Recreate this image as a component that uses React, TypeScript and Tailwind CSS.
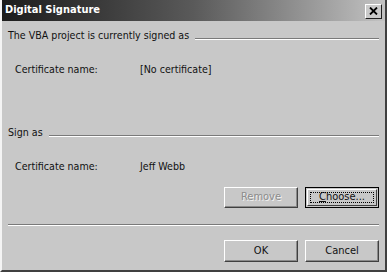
export default function App() {
  const font = { fontFamily: '"DejaVu Sans Condensed", "DejaVu Sans", "Liberation Sans", sans-serif' };

  return (
    <div
      className="w-[387px] h-[272px] bg-[#c8c8c8] text-[10.6px] text-[#111] flex flex-col border-l-2 border-l-[#f4f4f4] border-r-2 border-r-[#404040] border-b-2 border-b-[#404040] overflow-hidden"
      style={font}
    >
      {/* title bar */}
      <div className="h-[21px] shrink-0 flex items-center justify-between pl-[2px] pr-[5px] bg-gradient-to-r from-[#1c1c1c] via-[#5a5a5a] to-[#c4c4c4] -ml-[2px] -mr-[2px]">
        <span className="pl-[3px] font-bold text-white text-[11px]">Digital Signature</span>
        <button
          type="button"
          aria-label="Close"
          className="w-[17px] h-[15px] bg-[#cacaca] border border-t-white border-l-white border-r-[#202020] border-b-[#202020] flex items-center justify-center mt-[1px]"
        >
          <svg width="9" height="8" viewBox="0 0 9 8" aria-hidden="true">
            <path d="M1 0.5 L8 7.5 M8 0.5 L1 7.5" stroke="#000" strokeWidth="1.8" />
          </svg>
        </button>
      </div>

      <div className="flex-1 flex flex-col pl-[6px] pr-[6px]">
        {/* current signature */}
        <div className="flex items-center mt-[8px] h-[14px]">
          <span className="whitespace-nowrap">The VBA project is currently signed as</span>
          <div className="flex-1 ml-[6px] mt-[6px] border-t border-t-[#7a7a7a] border-b border-b-white" />
        </div>
        <div className="flex items-center mt-[20px] pl-[7px] h-[14px]">
          <span className="w-[125px]">Certificate name:</span>
          <span>[No certificate]</span>
        </div>

        {/* sign as */}
        <div className="flex items-center mt-[49px] h-[14px]">
          <span className="whitespace-nowrap">Sign as</span>
          <div className="flex-1 ml-[6px] mt-[6px] border-t border-t-[#7a7a7a] border-b border-b-white" />
        </div>
        <div className="flex items-center mt-[20px] pl-[7px] h-[14px]">
          <span className="w-[125px]">Certificate name:</span>
          <span>Jeff Webb</span>
        </div>

        <div className="flex justify-end gap-[7px] mt-[13px] text-[11px]">
          <button
            type="button"
            disabled
            className="w-[74px] h-[21px] bg-[#c8c8c8] border border-t-white border-l-white border-r-[#404040] border-b-[#404040] shadow-[inset_-1px_-1px_0_#8a8a8a] text-[#8c8c8c] [text-shadow:1px_1px_0_#f2f2f2]"
          >
            Remove
          </button>
          <button
            type="button"
            className="w-[74px] h-[21px] bg-[#c8c8c8] border border-black p-[1px] flex"
          >
            <span className="flex-1 flex border border-t-white border-l-white border-r-[#404040] border-b-[#404040] p-[2px]">
              <span className="flex-1 flex items-center justify-center outline outline-1 outline-dotted outline-black -outline-offset-1">
                <span>
                  <span className="underline">C</span>hoose...
                </span>
              </span>
            </span>
          </button>
        </div>

        <div className="mt-[16px] border-t border-t-[#7a7a7a] border-b border-b-white" />

        <div className="flex justify-end gap-[7px] mt-[14px] text-[11px]">
          <button
            type="button"
            className="w-[74px] h-[22px] bg-[#c8c8c8] border border-t-white border-l-white border-r-[#404040] border-b-[#404040] shadow-[inset_-1px_-1px_0_#8a8a8a]"
          >
            OK
          </button>
          <button
            type="button"
            className="w-[74px] h-[22px] bg-[#c8c8c8] border border-t-white border-l-white border-r-[#404040] border-b-[#404040] shadow-[inset_-1px_-1px_0_#8a8a8a]"
          >
            Cancel
          </button>
        </div>
      </div>
    </div>
  );
}
